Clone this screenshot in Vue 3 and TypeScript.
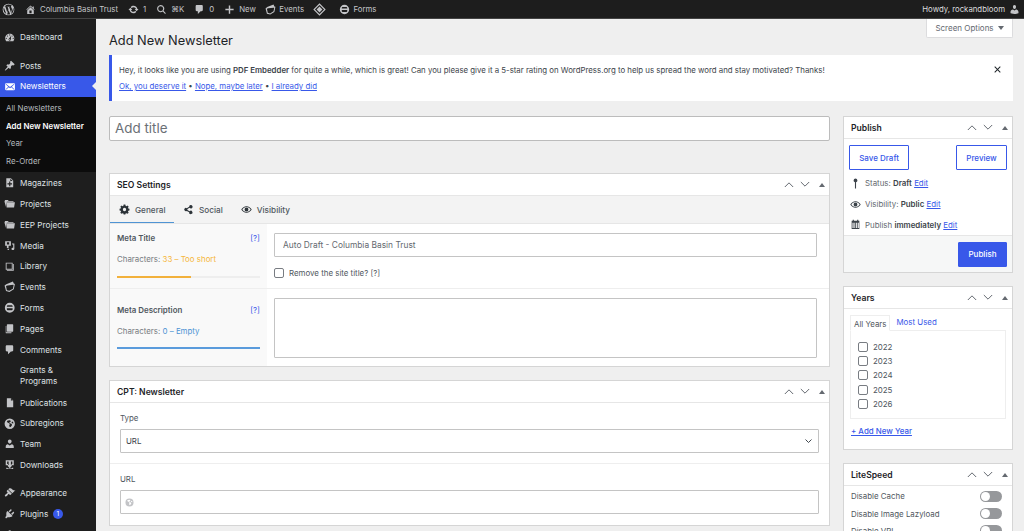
<script setup lang="ts">
type MenuItem = { label: string; icon: string; sep?: boolean; badge?: string; tall?: boolean; active?: boolean }

// dashicons-ish glyphs on a 20x20 box
const icons: Record<string, string> = {
  wp: 'M10 1a9 9 0 1 0 0 18 9 9 0 0 0 0-18zM2.2 10c0-1.1.2-2.2.7-3.2l3.7 10.2A7.8 7.8 0 0 1 2.2 10zm7.8 7.8c-.8 0-1.5-.1-2.2-.3l2.3-6.8 2.4 6.5v.1c-.8.3-1.6.5-2.5.5zm1.1-11.500c.5 0 .9-.1.9-.1.4 0 .4-.7 0-.6 0 0-1.300.1-2.100.1-.8 0-2-.1-2-.1-.4 0-.5.6 0 .6 0 0 .4.1.8.1l1.200 3.300-1.700 5-2.800-8.300c.5 0 .9-.1.9-.1.4 0 .4-.7 0-.6 0 0-1.300.1-2.100.1h-.5A7.800 7.800 0 0 1 15.300 4.300h-.1c-.8 0-1.300.7-1.300 1.400 0 .6.4 1.200.8 1.800.3.5.6 1.200.6 2.200 0 .7-.3 1.500-.6 2.600l-.8 2.700zm2.900 10.600l2.400-6.900c.4-1.100.6-2 .6-2.800 0-.3 0-.6-.1-.8a7.800 7.800 0 0 1-2.900 10.500z',
  home: 'M16 8.500l1.530 1.530-1.060 1.060L10 4.620l-6.470 6.470-1.060-1.060L10 2.500l4 4v-2h2v4zm-6-2.460l6 5.990V18H4v-5.970zM12 17v-5H8v5h4z',
  update: 'M10.200 3.280c3.530 0 6.430 2.610 6.920 6h2.080l-3.500 4-3.500-4h2.320c-.45-1.970-2.210-3.450-4.320-3.450-1.450 0-2.730.71-3.540 1.780L4.950 5.660C6.230 4.200 8.110 3.280 10.200 3.280zm-.4 13.440c-3.520 0-6.430-2.610-6.920-6H.8l3.500-4c1.170 1.330 2.330 2.670 3.500 4H5.480c.45 1.970 2.210 3.450 4.320 3.450 1.450 0 2.730-.71 3.540-1.780l1.710 1.950c-1.280 1.460-3.150 2.380-5.250 2.380z',
  search: 'M8.500 2a6.500 6.500 0 0 1 5.200 10.400l4.200 4.200-1.400 1.400-4.200-4.200A6.500 6.500 0 1 1 8.500 2zm0 2a4.500 4.500 0 1 0 0 9 4.500 4.500 0 0 0 0-9z',
  comment: 'M5 2h9c1.100 0 2 .9 2 2v7c0 1.100-.9 2-2 2h-2l-5 5v-5H5c-1.100 0-2-.9-2-2V4c0-1.100.9-2 2-2z',
  plus: 'M17.500 8.700v2.600h-6.200v6.200H8.700v-6.200H2.500V8.700h6.200V2.500h2.600v6.200z',
  events: 'M4 5.500L15.500 1l1.500 3.500L19 5l-2 9.500-7.500 4.500-6-1.500L1 8zm1.900 2.300L3.500 8.500l1.500 7.500 4.200 1.100 6.300-3.800 1.300-6.400-1-.3z',
  diamond: 'M10 .5L19.500 10 10 19.500.5 10zm0 2.500L3 10l7 7 7-7zm0 2.500l4.500 4.500-4.500 4.500L5.500 10z',
  forms: 'M10 1.500a8.500 8.500 0 1 1 0 17 8.500 8.500 0 0 1 0-17zM7 5.500C5.900 5.500 5 6.400 5 7.500v.8h10v-.8c0-1.100-.9-2-2-2zM5 11v1.500c0 1.100.9 2 2 2h6c1.100 0 2-.9 2-2V11z',
  user: 'M10 9.250c-2.270 0-2.730-3.440-2.730-3.440C7 4.020 7.820 2 9.970 2c2.160 0 2.980 2.020 2.710 3.810 0 0-.41 3.440-2.680 3.440zm0 2.570L12.720 10c2.390 0 4.520 2.330 4.520 4.530v2.490s-3.650 1.130-7.240 1.130c-3.650 0-7.240-1.130-7.240-1.130v-2.490c0-2.250 1.940-4.480 4.470-4.480z',
  dashboard: 'M3.760 16h12.480c1.100-1.370 1.760-3.110 1.760-5 0-4.420-3.580-8-8-8s-8 3.580-8 8c0 1.890.66 3.630 1.760 5zM10 4c.55 0 1 .45 1 1s-.45 1-1 1-1-.45-1-1 .45-1 1-1zM6 6c.55 0 1 .45 1 1s-.45 1-1 1-1-.45-1-1 .45-1 1-1zm8 0c.55 0 1 .45 1 1s-.45 1-1 1-1-.45-1-1 .45-1 1-1zm-5.370 5.550L12 7v6c0 1.100-.9 2-2 2s-2-.9-2-2c0-.57.24-1.080.63-1.450zM4 10c.55 0 1 .45 1 1s-.45 1-1 1-1-.45-1-1 .45-1 1-1zm12 0c.55 0 1 .45 1 1s-.45 1-1 1-1-.45-1-1 .45-1 1-1zm-5 3c0-.55-.45-1-1-1s-1 .45-1 1 .45 1 1 1 1-.45 1-1z',
  pin: 'M10.440 3.020l1.820-1.820 6.360 6.350-1.830 1.820c-1.050-.68-2.480-.57-3.410.36l-.75.75c-.92.93-1.040 2.350-.35 3.410l-1.830 1.820-2.410-2.410-2.800 2.790c-.42.42-3.380 2.710-3.800 2.290s1.860-3.390 2.280-3.810l2.790-2.790L4.100 9.360l1.830-1.820c1.050.69 2.480.57 3.400-.36l.75-.75c.93-.92 1.050-2.350.36-3.410z',
  mail: 'M19 14.500v-9c0-.83-.67-1.500-1.500-1.500H3.490c-.83 0-1.500.67-1.500 1.500v9c0 .83.67 1.500 1.500 1.500H17.500c.83 0 1.500-.67 1.500-1.500zm-1.310-9.110c.33.33.15.67-.03.84L13.600 9.950l3.900 4.060c.12.14.2.36.06.51-.13.16-.43.15-.56.05l-4.370-3.730-2.140 1.950-2.130-1.950-4.370 3.730c-.13.1-.43.11-.56-.05-.14-.15-.06-.37.06-.51l3.900-4.060-4.060-3.720c-.18-.17-.36-.51-.03-.84s.67-.17.95.07l6.240 5.040 6.250-5.040c.28-.24.62-.4.95-.07z',
  doc: 'M4 2h8l4 4v12H4zm7 1v4h4zM9 8v3H6v2h3v3h2v-3h3v-2h-3V8z',
  folder: 'M1 5l1-1.500h5L8 5h8l1 1.500H5L3.500 15.500 1 7zm4 2.500h14L17.500 16.500h-13z',
  media: 'M2 2h10v8H8v4H5v-4H2zm3 2v4h4V4zm9 2h4v9c0 1.500-1 2.500-2.500 2.500S13 16.500 13 15.500s1-2 2.500-2h.5V8h-2zM6 15h3c0 1.500-.5 2.500-1.500 2.500S6 16.500 6 15z',
  library: 'M3 3h12v12H3zm1.500 1.500v9h9v-9zM17 5v12H5v-1.500h10.500V5z',
  pages: 'M6 2h9c.6 0 1 .4 1 1v11c0 .6-.4 1-1 1H6c-.6 0-1-.4-1-1V3c0-.6.4-1 1-1zM3 5h1v11h9v1c0 .6-.4 1-1 1H4c-.6 0-1-.4-1-1z',
  page: 'M5 2h7l4 4v12H5zm7 .5V6h3.500z',
  globe: 'M10 1a9 9 0 1 1 0 18 9 9 0 0 1 0-18zM5 5l1 3 3 1 1 2-1 2 1 3 2-1 2-3-1-2-3-1-1-1 2-1 1-2-2-1-3 .5zm10 1l-2 1 1 2 2 .5 .5-1z',
  team: 'M10 2.500a3.300 3.300 0 0 1 3.300 3.300c0 2-1.300 4-3.300 4s-3.300-2-3.300-4A3.300 3.300 0 0 1 10 2.500zM6.500 11L10 13l3.500-2c2 .6 3.500 2 3.500 4v2.500H3V15c0-2 1.500-3.400 3.500-4z',
  download: 'M3 2h14v9h-4V8.500h1.500v-4h-9v4H7V11H3zm5 2.500h4v6h3l-5 5.500-5-5.500h3zM4 15h1.500l1.500 1.500h6l1.500-1.500H16v2.500H4z',
  brush: 'M14.480 11.060L7.410 3.990l1.500-1.500c.5-.56 2.300-.47 3.510.32 1.210.8 1.430 1.280 2.910 2.100 1.180.64 2.450 1.260 4.450.85zm-.71.71L6.700 4.700 4.930 6.470c-.39.39-.39 1.020 0 1.410l1.060 1.060c.39.39.39 1.030 0 1.420-.6.6-1.430 1.110-2.210 1.690-.35.26-.7.53-1.010.84C1.430 13.710.96 15.120 1.870 16.020c.91.91 2.320.44 3.140-.39.31-.31.58-.66.84-1.010.58-.78 1.090-1.610 1.690-2.210.39-.39 1.020-.39 1.410 0l1.060 1.060c.39.39 1.020.39 1.410 0z',
  plug: 'M13.110 4.360L9.870 7.600 8 5.730l3.240-3.240c.35-.34 1.050-.2 1.560.32.52.51.66 1.210.31 1.550zm-8 1.770l.91-1.120 9.010 9.010-1.190.84c-.71.71-2.630 1.160-3.820 1.160H6.140L4.900 17.260c-.59.59-1.540.59-2.120 0-.59-.58-.59-1.530 0-2.120l1.240-1.240v-3.880c0-1.130.4-3.190 1.090-3.890zm7.260 3.970l3.240-3.240c.34-.35 1.040-.21 1.550.31.52.51.66 1.210.31 1.550l-3.240 3.250z',
  gear: 'M8.500 1h3l.5 2.400 1.500.6 2-1.300 2.100 2.100L16.300 6.800l.7 1.600 2 .4v3l-2 .5-.7 1.500 1.300 2-2.100 2.100-2-1.300-1.500.7-.5 2h-3l-.5-2-1.500-.7-2 1.300-2.100-2.100 1.300-2-.7-1.500-2-.5v-3l2-.4.7-1.600-1.300-2L4.500 2.700l2 1.300L8 3.400zM10 7a3 3 0 1 0 0 6 3 3 0 0 0 0-6z',
  share: 'M14.500 2a3 3 0 1 1-2.400 4.800L8 9.200v1.600l4.100 2.400a3 3 0 1 1-.9 1.700L6.900 12.500a3 3 0 1 1 0-5l4.300-2.400A3 3 0 0 1 14.500 2z',
  eye: 'M10 4c4 0 7.500 2.500 9.500 6-2 3.500-5.500 6-9.500 6s-7.500-2.500-9.500-6C2.500 6.500 6 4 10 4zm0 1.500c-3.100 0-5.900 1.800-7.500 4.500 1.600 2.700 4.400 4.500 7.500 4.500s5.900-1.800 7.500-4.500c-1.600-2.700-4.400-4.500-7.500-4.500zM10 6.500a3.500 3.500 0 1 1 0 7 3.500 3.500 0 0 1 0-7z',
  map: 'M10 1a3.500 3.500 0 0 1 1 6.850V19H9V7.850A3.500 3.500 0 0 1 10 1z',
  calendar: 'M3 3h2V1.500h2V3h6V1.500h2V3h2v15H3zm1.500 4v9.500h2V7zm3.500 0v9.500h1.500V7zm3 0v9.500h1.500V7zm3 0v9.500h2V7z',
  close: 'M4.500 3L10 8.500 15.500 3 17 4.500 11.500 10l5.500 5.500-1.500 1.500L10 11.500 4.500 17 3 15.500 8.500 10 3 4.500z',
}

const menu: MenuItem[] = [
  { label: 'Dashboard', icon: 'dashboard' },
  { label: 'Posts', icon: 'pin', sep: true },
  { label: 'Newsletters', icon: 'mail', active: true },
]

const subMenu = [
  { label: 'All Newsletters' },
  { label: 'Add New Newsletter', current: true },
  { label: 'Year' },
  { label: 'Re-Order' },
]

const menuRest: MenuItem[] = [
  { label: 'Magazines', icon: 'doc' },
  { label: 'Projects', icon: 'folder' },
  { label: 'EEP Projects', icon: 'folder' },
  { label: 'Media', icon: 'media' },
  { label: 'Library', icon: 'library' },
  { label: 'Events', icon: 'events' },
  { label: 'Forms', icon: 'forms' },
  { label: 'Pages', icon: 'pages' },
  { label: 'Comments', icon: 'comment' },
  { label: 'Grants & Programs', icon: '', tall: true },
  { label: 'Publications', icon: 'page' },
  { label: 'Subregions', icon: 'globe' },
  { label: 'Team', icon: 'team' },
  { label: 'Downloads', icon: 'download' },
  { label: 'Appearance', icon: 'brush', sep: true },
  { label: 'Plugins', icon: 'plug', badge: '1' },
  { label: '', icon: 'user' },
]

const years = ['2022', '2023', '2024', '2025', '2026']
const speedRows = ['Disable Cache', 'Disable Image Lazyload', 'Disable VPI']
</script>

<template>
  <div class="page">
    <header class="topbar">
      <div class="bar-left">
        <svg class="ab-ico wp" viewBox="0 0 20 20"><path fill-rule="evenodd" :d="icons.wp" /></svg>
        <span class="ab-item"><svg class="ab-ico" viewBox="0 0 20 20"><path fill-rule="evenodd" :d="icons.home" /></svg>Columbia Basin Trust</span>
        <span class="ab-item"><svg class="ab-ico" viewBox="0 0 20 20"><path :d="icons.update" /></svg>1</span>
        <span class="ab-item"><svg class="ab-ico" viewBox="0 0 20 20"><path fill-rule="evenodd" :d="icons.search" /></svg>⌘K</span>
        <span class="ab-item"><svg class="ab-ico" viewBox="0 0 20 20"><path :d="icons.comment" /></svg>0</span>
        <span class="ab-item"><svg class="ab-ico" viewBox="0 0 20 20"><path :d="icons.plus" /></svg>New</span>
        <span class="ab-item events-item"><svg class="ab-ico" viewBox="0 0 20 20"><path fill-rule="evenodd" :d="icons.events" /></svg>Events</span>
        <span class="ab-item diamond-item"><svg class="ab-ico big" viewBox="0 0 20 20"><path fill-rule="evenodd" :d="icons.diamond" /></svg></span>
        <span class="ab-item forms-item"><svg class="ab-ico" viewBox="0 0 20 20"><path fill-rule="evenodd" :d="icons.forms" /></svg>Forms</span>
      </div>
      <span class="ab-item howdy">Howdy, rockandbloom<svg class="ab-ico" viewBox="0 0 20 20"><path :d="icons.user" /></svg></span>
    </header>

    <div class="body">
      <nav class="sidebar">
        <a
          v-for="item in menu"
          :key="item.label"
          class="menu-item"
          :class="{ sep: item.sep, active: item.active }"
        >
          <svg class="menu-ico" viewBox="0 0 20 20"><path fill-rule="evenodd" :d="icons[item.icon]" /></svg>
          <span>{{ item.label }}</span>
        </a>
        <div class="submenu">
          <a v-for="sub in subMenu" :key="sub.label" :class="{ current: sub.current }">{{ sub.label }}</a>
        </div>
        <a
          v-for="item in menuRest"
          :key="item.icon + item.label"
          class="menu-item"
          :class="{ sep: item.sep, tall: item.tall }"
        >
          <svg v-if="item.icon" class="menu-ico" viewBox="0 0 20 20"><path fill-rule="evenodd" :d="icons[item.icon]" /></svg>
          <span v-else class="menu-ico"></span>
          <span>{{ item.label }}</span>
          <span v-if="item.badge" class="badge">{{ item.badge }}</span>
        </a>
      </nav>

      <main class="main">
        <div class="screen-options">Screen Options <i class="caret"></i></div>
        <h1 class="title">Add New Newsletter</h1>

        <div class="notice">
          <p>Hey, it looks like you are using <b>PDF Embedder</b> for quite a while, which is great! Can you please give it a 5-star rating on WordPress.org to help us spread the word and stay motivated? Thanks!</p>
          <p class="notice-links"><a>Ok, you deserve it</a> • <a>Nope, maybe later</a> • <a>I already did</a></p>
          <svg class="notice-close" viewBox="0 0 20 20"><path :d="icons.close" /></svg>
        </div>

        <div class="columns">
          <div class="col-main">
            <input class="title-input" placeholder="Add title" />

            <section class="box seo">
              <div class="box-head">
                <h2>SEO Settings</h2>
                <div class="box-ctrl">
                  <svg viewBox="0 0 12 8"><path d="M1 7l5-5 5 5" /></svg>
                  <svg viewBox="0 0 12 8"><path d="M1 1l5 5 5-5" /></svg>
                  <i class="tri"></i>
                </div>
              </div>
              <div class="tabs">
                <span class="tab on"><svg viewBox="0 0 20 20"><path fill-rule="evenodd" :d="icons.gear" /></svg>General</span>
                <span class="tab"><svg viewBox="0 0 20 20"><path :d="icons.share" /></svg>Social</span>
                <span class="tab"><svg viewBox="0 0 20 20"><path fill-rule="evenodd" :d="icons.eye" /></svg>Visibility</span>
              </div>
              <div class="seo-row first">
                <div class="seo-side">
                  <div class="seo-label"><b>Meta Title</b><a>[?]</a></div>
                  <div class="seo-count">Characters: <span class="warn">33 – Too short</span></div>
                  <div class="meter"><div class="meter-fill warn-fill" :style="{ width: '52%' }"></div></div>
                </div>
                <div class="seo-field">
                  <input class="field" value="Auto Draft - Columbia Basin Trust" />
                  <label class="check-line"><input type="checkbox" class="check" />Remove the site title? [?]</label>
                </div>
              </div>
              <div class="seo-row second">
                <div class="seo-side">
                  <div class="seo-label"><b>Meta Description</b><a>[?]</a></div>
                  <div class="seo-count">Characters: <span class="info">0 – Empty</span></div>
                  <div class="meter"><div class="meter-fill info-fill" :style="{ width: '100%' }"></div></div>
                </div>
                <div class="seo-field">
                  <textarea class="field desc"></textarea>
                </div>
              </div>
            </section>

            <section class="box cpt">
              <div class="box-head">
                <h2>CPT: Newsletter</h2>
                <div class="box-ctrl">
                  <svg viewBox="0 0 12 8"><path d="M1 7l5-5 5 5" /></svg>
                  <svg viewBox="0 0 12 8"><path d="M1 1l5 5 5-5" /></svg>
                  <i class="tri"></i>
                </div>
              </div>
              <div class="cpt-group">
                <label>Type</label>
                <div class="field select">URL<svg viewBox="0 0 12 8"><path d="M2 2l4 4 4-4" /></svg></div>
              </div>
              <div class="cpt-group">
                <label>URL</label>
                <div class="field url"><svg viewBox="0 0 20 20"><path fill-rule="evenodd" :d="icons.globe" /></svg></div>
              </div>
            </section>
          </div>

          <aside class="col-side">
            <section class="box publish">
              <div class="box-head">
                <h2>Publish</h2>
                <div class="box-ctrl">
                  <svg viewBox="0 0 12 8"><path d="M1 7l5-5 5 5" /></svg>
                  <svg viewBox="0 0 12 8"><path d="M1 1l5 5 5-5" /></svg>
                  <i class="tri"></i>
                </div>
              </div>
              <div class="pub-buttons">
                <button class="btn save">Save Draft</button>
                <button class="btn preview">Preview</button>
              </div>
              <div class="pub-line"><svg viewBox="0 0 20 20"><path :d="icons.map" /></svg><span>Status: <b>Draft</b> <a>Edit</a></span></div>
              <div class="pub-line"><svg viewBox="0 0 20 20"><path fill-rule="evenodd" :d="icons.eye" /></svg><span>Visibility: <b>Public</b> <a>Edit</a></span></div>
              <div class="pub-line"><svg viewBox="0 0 20 20"><path fill-rule="evenodd" :d="icons.calendar" /></svg><span>Publish <b>immediately</b> <a>Edit</a></span></div>
              <div class="pub-foot"><button class="btn primary">Publish</button></div>
            </section>

            <section class="box years">
              <div class="box-head">
                <h2>Years</h2>
                <div class="box-ctrl">
                  <svg viewBox="0 0 12 8"><path d="M1 7l5-5 5 5" /></svg>
                  <svg viewBox="0 0 12 8"><path d="M1 1l5 5 5-5" /></svg>
                  <i class="tri"></i>
                </div>
              </div>
              <div class="year-tabs">
                <span class="year-tab on">All Years</span>
                <a>Most Used</a>
              </div>
              <div class="year-list">
                <label v-for="year in years" :key="year"><input type="checkbox" class="check" />{{ year }}</label>
              </div>
              <a class="add-year">+ Add New Year</a>
            </section>

            <section class="box speed">
              <div class="box-head">
                <h2>LiteSpeed</h2>
                <div class="box-ctrl">
                  <svg viewBox="0 0 12 8"><path d="M1 7l5-5 5 5" /></svg>
                  <svg viewBox="0 0 12 8"><path d="M1 1l5 5 5-5" /></svg>
                  <i class="tri"></i>
                </div>
              </div>
              <div v-for="row in speedRows" :key="row" class="speed-row">
                <span>{{ row }}</span><i class="toggle"></i>
              </div>
            </section>
          </aside>
        </div>
      </main>
    </div>
  </div>
</template>

<style>
html, body { background: #efefef; overflow: hidden; }
</style>

<style scoped>
.page {
  height: 531px;
  overflow: hidden;
  font-family: Inter, "Liberation Sans", sans-serif;
  font-size: 7.9px;
  color: #3c434a;
  background: #efefef;
}
.topbar {
  height: 19px;
  background: #1d1d1d;
  border-bottom: 1px solid #444;
  box-sizing: border-box;
  display: flex;
  justify-content: space-between;
  align-items: center;
  padding: 0 4px 0 2px;
  color: #c3c4c7;
  font-size: 7.8px;
}
.bar-left { display: flex; align-items: center; }
.ab-item { display: flex; align-items: center; gap: 4px; margin-left: 10px; white-space: nowrap; }
.events-item { margin-left: 9.5px; gap: 3px; }
.diamond-item { margin-left: 8.5px; }
.forms-item { margin-left: 13px; }
.howdy { color: #dcdcde; margin-left: 0; }
.ab-ico { width: 11px; height: 11px; fill: #c3c4c7; flex: none; }
.ab-ico.wp { width: 13px; height: 13px; }
.ab-ico.big { width: 13px; height: 13px; }

.body { display: flex; height: 512px; }
.sidebar {
  width: 96px;
  flex: none;
  background: #1e1e1e;
  padding-top: 8px;
  box-sizing: border-box;
  color: #dfe1e4;
  font-size: 8.2px;
}
.sidebar a { color: inherit; }
.menu-item {
  height: 20.8px;
  display: flex;
  align-items: center;
  gap: 4.5px;
  padding-left: 3px;
  white-space: nowrap;
}
.menu-item.sep { margin-top: 7.5px; }
.menu-item.tall { height: 32.2px; white-space: normal; line-height: 11.5px; }
.menu-item.tall span:last-child { width: 60px; }
.sidebar .menu-item.active { background: #3858e9; color: #fff; position: relative; }
.menu-item.active::after {
  content: '';
  position: absolute;
  right: 0;
  top: 6px;
  border: 4.5px solid transparent;
  border-right-color: #efefef;
  border-left: 0;
}
.menu-ico { width: 11.5px; height: 11.5px; flex: none; fill: #c3c4c7; margin-left: 1px; }
.menu-item.active .menu-ico { fill: #fff; }
.badge {
  width: 10px;
  height: 10px;
  border-radius: 50%;
  background: #3858e9;
  color: #fff;
  font-size: 6.5px;
  line-height: 10px;
  text-align: center;
  margin-left: 0;
}
.submenu {
  background: #0c0c0c;
  padding: 3.5px 0 2px;
  font-size: 7.9px;
  margin-bottom: 0.8px;
}
.sidebar .submenu a { display: block; height: 17.4px; line-height: 17.4px; padding-left: 6px; white-space: nowrap; color: #b4b9be; }
.sidebar .submenu a.current { color: #fff; font-weight: 600; }

.main {
  flex: 1;
  position: relative;
  padding: 0 11px 0 13px;
  min-width: 0;
}
.screen-options {
  position: absolute;
  top: 0;
  right: 11px;
  width: 87px;
  height: 19px;
  box-sizing: border-box;
  background: #fff;
  border: 1px solid #dcdcde;
  border-top: 0;
  border-radius: 0 0 2px 2px;
  display: flex;
  align-items: center;
  justify-content: center;
  gap: 4px;
  color: #646970;
  font-size: 8px;
}
.caret { border: 3px solid transparent; border-top: 4px solid #646970; border-bottom: 0; }
.title {
  margin: 0;
  height: 36px;
  line-height: 44px;
  font-size: 12.8px;
  font-weight: 400;
  color: #1d2327;
}
.notice {
  position: relative;
  height: 46px;
  box-sizing: border-box;
  background: #fff;
  border-left: 3px solid #3858e9;
  padding: 10px 7px;
  color: #3c434a;
  font-size: 7.83px;
}
.notice p { margin: 0; line-height: 11px; white-space: nowrap; }
.notice b { font-weight: 600; }
.notice-links { margin-top: 5px !important; color: #3c434a; }
a { color: #3858e9; }
.notice-links a, .pub-line a, .add-year { text-decoration: underline; }
.notice-close { position: absolute; right: 11px; top: 10px; width: 9px; height: 9px; fill: #1d2327; }

.columns { display: flex; gap: 13px; margin-top: 15px; align-items: flex-start; }
.col-main { width: 721px; flex: none; }
.col-side { width: 170px; flex: none; }
.title-input {
  display: block;
  width: 100%;
  height: 25px;
  box-sizing: border-box;
  border: 1px solid #bcbcbc;
  border-radius: 2px;
  padding: 0 5px 1px;
  font: 400 13.4px Inter, "Liberation Sans", sans-serif;
  background: #fff;
  outline: none;
}
.title-input::placeholder { color: #6b7076; }

.box {
  background: #fff;
  border: 1px solid #d5d5d5;
  box-sizing: border-box;
}
.box-head {
  height: 22px;
  display: flex;
  justify-content: space-between;
  align-items: center;
  padding: 0 4px 0 7px;
  border-bottom: 1px solid #e6e6e6;
  box-sizing: border-box;
}
.box-head h2 { margin: 0; font-size: 8.6px; font-weight: 600; color: #1d2327; }
.box-ctrl { display: flex; align-items: center; gap: 6px; }
.box-ctrl svg { width: 10px; height: 7px; fill: none; stroke: #646970; stroke-width: 1.2; }
.tri { border: 3px solid transparent; border-bottom: 4px solid #646970; border-top: 0; margin-left: 3px; }

.seo { margin-top: 32px; height: 194px; }
.tabs {
  display: flex;
  height: 28px;
  background: #f3f3f3;
  border-bottom: 1px solid #e6e6e6;
  box-sizing: border-box;
  font-size: 8.2px;
}
.tab { display: flex; align-items: center; gap: 5px; padding: 0 9px; color: #50575e; font-weight: 500; }
.tab svg { width: 11px; height: 11px; fill: #2c3338; flex: none; }
.tab.on { box-shadow: inset 0 -1px 0 #4f94d4; width: 64px; box-sizing: border-box; }
.seo-row { display: flex; }
.seo-row.first { height: 65px; border-bottom: 1px solid #eee; box-sizing: border-box; }
.seo-row.second { height: 77px; }
.seo-side { width: 157px; flex: none; background: #f9f9f9; padding: 0 7px; box-sizing: border-box; }
.first .seo-side { padding-top: 9px; }
.second .seo-side { padding-top: 16px; }
.seo-label { display: flex; justify-content: space-between; height: 11px; line-height: 11px; color: #50575e; }
.seo-label b { font-weight: 600; }
.seo-count { margin-top: 10px; line-height: 11px; color: #787c82; }
.warn { color: #f6b73c; }
.info { color: #4f94d4; }
.meter { margin-top: 11px; height: 2px; background: #eee; }
.second .meter { margin-top: 10px; }
.meter-fill { height: 100%; }
.warn-fill { background: #f2b13c; }
.info-fill { background: #5a9bdc; }
.seo-field { flex: 1; padding: 9px 12px 0 7px; }
.field {
  display: block;
  width: 100%;
  box-sizing: border-box;
  background: #fff;
  border: 1px solid #c4c4c4;
  border-radius: 1px;
  font: inherit;
  color: #646970;
  outline: none;
  resize: none;
}
input.field { height: 24px; padding: 0 8px; font-size: 8.4px; }
.desc { height: 60px; }
.check-line { display: flex; align-items: center; gap: 5px; margin-top: 11px; color: #50575e; height: 10px; }
.check {
  appearance: none;
  margin: 0;
  width: 10px;
  height: 10px;
  box-sizing: border-box;
  border: 1px solid #787c82;
  border-radius: 2px;
  background: #fff;
  flex: none;
}

.cpt { margin-top: 13px; height: 146px; }
.cpt-group { margin: 0 10px; padding-top: 10px; }
.cpt-group + .cpt-group { margin: 10px 0 0; padding: 10px 10px 0; border-top: 1px solid #eee; }
.cpt-group label { display: block; height: 11px; line-height: 11px; margin-bottom: 5px; color: #50575e; }
.select {
  height: 24px;
  display: flex;
  align-items: center;
  justify-content: space-between;
  padding: 0 5px;
  color: #3c434a;
}
.select svg { width: 9px; height: 6px; fill: none; stroke: #3c434a; stroke-width: 1.300; }
.url { height: 24px; display: flex; align-items: center; padding: 0 4px; }
.url svg { width: 9px; height: 9px; fill: #c3c4c7; }

.publish { height: 157px; position: relative; }
.pub-buttons { display: flex; justify-content: space-between; padding: 6px 5px 3px; }
.btn {
  height: 25px;
  box-sizing: border-box;
  border: 1px solid #3858e9;
  border-radius: 1px;
  background: #fff;
  color: #3858e9;
  font: 500 8px Inter, "Liberation Sans", sans-serif;
  padding: 0;
}
.save { width: 60px; }
.preview { width: 51px; }
.btn.primary { width: 49px; background: #3858e9; color: #fff; }
.pub-line { display: flex; align-items: center; gap: 4px; height: 20.7px; padding-left: 6px; color: #646970; }
.pub-line svg { width: 11px; height: 11px; fill: #3c434a; flex: none; }
.pub-line b { font-weight: 600; color: #3c434a; }
.pub-foot {
  position: absolute;
  left: 0;
  right: 0;
  bottom: 0;
  height: 37px;
  background: #f6f7f7;
  border-top: 1px solid #e6e6e6;
  box-sizing: border-box;
  display: flex;
  justify-content: flex-end;
  align-items: center;
  padding-right: 5px;
}

.years { margin-top: 13px; height: 164px; }
.year-tabs { display: flex; align-items: flex-end; height: 21px; padding: 0 6px; gap: 6px; }
.year-tabs a { line-height: 16px; }
.year-tab {
  height: 16px;
  line-height: 16px;
  padding: 0 3px;
  border: 1px solid #eee;
  border-bottom: 1px solid #fff;
  box-sizing: border-box;
  margin-bottom: -1px;
  position: relative;
  color: #50575e;
}
.year-list {
  margin: 0 6px;
  border: 1px solid #eee;
  height: 89px;
  box-sizing: border-box;
  padding: 8.5px 7px 0;
}
.year-list label { display: flex; align-items: center; gap: 5px; height: 14.4px; color: #50575e; }
.add-year { display: block; margin: 7px 7px 0; line-height: 11px; font-weight: 500; }

.speed { margin-top: 13px; height: 100px; }
.speed-row { display: flex; align-items: center; justify-content: space-between; height: 17.4px; padding: 0 10px 0 7px; color: #50575e; }
.speed-row:nth-child(2) { margin-top: 1.500px; }
.toggle {
  width: 22px;
  height: 11px;
  border-radius: 6px;
  background: #96989b;
  position: relative;
}
.toggle::before {
  content: '';
  position: absolute;
  left: 1px;
  top: 1px;
  width: 9px;
  height: 9px;
  border-radius: 50%;
  background: #fff;
}
</style>
